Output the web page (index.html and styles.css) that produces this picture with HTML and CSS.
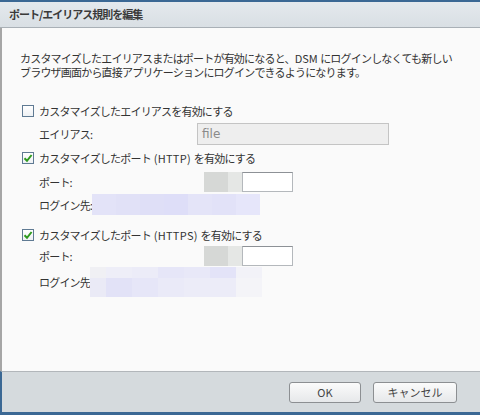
FILE: index.html
```html
<!DOCTYPE html>
<html lang="ja">
<head>
<meta charset="utf-8">
<link rel="stylesheet" href="styles.css">
</head>
<body>
<div class="win">
  <div class="title">ポート/エイリアス規則を編集</div>
  <div class="content">
    <div class="desc">
      <div class="dline">カスタマイズしたエイリアスまたはポートが有効になると、<span class="lat">DSM </span>にログインしなくても新しい</div>
      <div class="dline">ブラウザ画面から直接アプリケーションにログインできるようになります。</div>
    </div>

    <div class="check-row r1"><span class="cb"></span><span>カスタマイズしたエイリアスを有効にする</span></div>
    <div class="field-row alias"><span class="flabel">エイリアス:</span><div class="input disabled">file</div></div>

    <div class="check-row r2"><span class="cb on"><svg viewBox="0 0 10 10" width="10" height="10"><path d="M1.5 5.2 L4 7.8 L8.6 2" fill="none" stroke="#2f9a1e" stroke-width="2"/></svg></span><span>カスタマイズしたポート<span class="lat"> (HTTP) </span>を有効にする</span></div>
    <div class="field-row port p1"><span class="flabel">ポート:</span><div class="mosaic m-port"><i class="g1"></i><i class="g2"></i></div><div class="input port-in"></div></div>
    <div class="field-row login l1"><span class="llabel">ログイン先:</span><div class="mosaic m-l1"><i></i><i></i><i></i><i></i><i></i><i></i><i></i></div></div>

    <div class="check-row r3"><span class="cb on"><svg viewBox="0 0 10 10" width="10" height="10"><path d="M1.5 5.2 L4 7.8 L8.6 2" fill="none" stroke="#2f9a1e" stroke-width="2"/></svg></span><span>カスタマイズしたポート<span class="lat"> (HTTPS) </span>を有効にする</span></div>
    <div class="field-row port p2"><span class="flabel">ポート:</span><div class="mosaic m-port"><i class="g1"></i><i class="g2"></i></div><div class="input port-in"></div></div>
    <div class="field-row login l2"><span class="llabel">ログイン先:</span><div class="mosaic m-l2"><i></i><i></i><i></i><i></i><i></i><i></i><i></i></div></div>
  </div>
  <div class="footer">
    <button class="btn ok">OK</button>
    <button class="btn cancel">キャンセル</button>
  </div>
</div>
</body>
</html>
```
FILE: styles.css
```css
html, body { margin: 0; padding: 0; }
body {
  width: 480px; height: 415px; overflow: hidden;
  background: #3b6894;
  font-family: "Noto Sans CJK JP", "DejaVu Sans", sans-serif;
  color: #333;
}
.win {
  height: 412px;
  border-top: 2px solid #3b6894;
  box-sizing: border-box;
  display: flex; flex-direction: column;
}
.title {
  height: 25px; flex: none;
  background: linear-gradient(#e4e9ed, #d9dfe4);
  border-bottom: 1px solid #a9b0b6;
  font-size: 11px; font-weight: bold; color: #3a3a3a;
  line-height: 25px; padding-left: 9px;
  letter-spacing: -1px;
}
.content {
  flex: 1;
  background: #fafafa;
  border-left: 2px solid #a6a6a6;
  padding: 0 0 0 18px;
  font-size: 11px;
  letter-spacing: -0.8px;
  line-height: 14px;
}
.lat { letter-spacing: 0.3px; }
.desc {
  margin: 24px 0 0 0;
  color: #333;
}
.dline {
  height: 13.5px;
  line-height: 13.5px;
  white-space: nowrap;
}
.desc .lat { letter-spacing: 0; }
.check-row {
  display: flex; align-items: center; height: 20px; gap: 5px;
  margin-left: 2px;
}
.r1 { margin-top: 22px; }
.r2 { margin-top: 3px; }
.r3 { margin-top: 10px; }
.cb {
  width: 10px; height: 10px;
  border: 1px solid #5f7a93;
  background: linear-gradient(#fff, #eef1f4);
  display: inline-flex; align-items: center; justify-content: center;
  flex: none;
}
.field-row { display: flex; align-items: center; padding-left: 19px; }
.alias { height: 22px; margin-top: 2px; }
.flabel { width: 158px; flex: none; }
.input {
  box-sizing: border-box;
  border: 1px solid #b4b8bc;
  border-top-color: #8d9196;
  background: #fff;
}
.input.disabled {
  width: 192px; height: 22px;
  background: #eeeeee;
  color: #8a8a8a;
  font-family: "DejaVu Sans", sans-serif;
  font-size: 12px;
  letter-spacing: 0;
  line-height: 20px;
  padding-left: 4px;
  border-color: #c4c4c4;
}
.port { height: 20px; }
.p1 { margin-top: 4px; }
.p2 { margin-top: 1px; }
.mosaic { display: flex; flex: none; }
.mosaic i { display: block; }
.m-port { margin-left: 7px; height: 20px; }
.m-port .g1 { width: 24px; background: #d6d8d6; }
.m-port .g2 { width: 14px; background: #e5e7e5; }
.port-in { width: 51px; height: 20px; }
.login { height: 21px; }
.l1 { margin-top: 2px; }
.llabel { flex: none; }
.m-l1 { height: 21px; }
.m-l1 i { width: 24px; height: 21px; background: #e3e3f8; }
.m-l1 i:nth-child(2) { background: #e1e1f7; }
.m-l1 i:nth-child(3) { background: #dfdff7; }
.m-l1 i:nth-child(4) { background: #dedef8; }
.m-l1 i:nth-child(5) { background: #e4e4f8; }
.m-l1 i:nth-child(6) { background: #e2e2f8; }
.m-l1 i:nth-child(7) { background: #e6e6fa; }
.l2 { margin-top: 1px; height: 30px; }
.m-l2 { height: 30px; display: grid; grid-template-columns: 16px repeat(6, 26px); margin-left: -2px; }
.m-l2 i { height: 30px; }
.m-l2 i:nth-child(1) { background: linear-gradient(#f0f0f4 0 35%, #eaeaf6 35%); }
.m-l2 i:nth-child(2) { background: linear-gradient(#eeeef8 0 35%, #e2e2f7 35%); }
.m-l2 i:nth-child(3) { background: linear-gradient(#ececf8 0 35%, #e6e6f8 35%); }
.m-l2 i:nth-child(4) { background: linear-gradient(#e6e6f8 0 35%, #eaeaf8 35%); }
.m-l2 i:nth-child(5) { background: linear-gradient(#e8e8f8 0 35%, #ececf8 35%); }
.m-l2 i:nth-child(6) { background: linear-gradient(#e3e3f8 0 35%, #ececf8 35%); }
.m-l2 i:nth-child(7) { background: linear-gradient(#f2f2f8 0 35%, #f4f4f8 35%); }
.footer {
  height: 40px; flex: none;
  background: #d5dadd;
  border-top: 1px solid #b2b6ba;
  border-left: 2px solid #3b6894;
  display: flex; align-items: center; justify-content: flex-end;
  gap: 12px; padding-right: 23px;
}
.btn {
  height: 21px; box-sizing: border-box;
  border: 1px solid #8c8f92; border-radius: 3px;
  background: linear-gradient(#fbfbfb, #e6e8ea);
  font-family: "Noto Sans CJK JP", sans-serif;
  font-size: 11px; color: #444; padding: 0;
  line-height: 19px;
}
.ok { width: 72px; }
.cancel { width: 84px; }
```
